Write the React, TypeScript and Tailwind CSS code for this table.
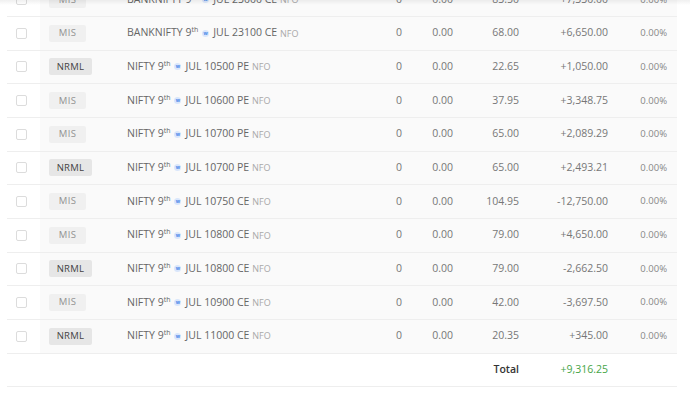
import React from "react";

type Pos = {
  product: "MIS" | "NRML";
  name: string;
  strike: string;
  ltp: string;
  pnl: string;
};

const rows: Pos[] = [
  { product: "MIS", name: "BANKNIFTY", strike: "23000 CE", ltp: "83.50", pnl: "+7,330.00" },
  { product: "MIS", name: "BANKNIFTY", strike: "23100 CE", ltp: "68.00", pnl: "+6,650.00" },
  { product: "NRML", name: "NIFTY", strike: "10500 PE", ltp: "22.65", pnl: "+1,050.00" },
  { product: "MIS", name: "NIFTY", strike: "10600 PE", ltp: "37.95", pnl: "+3,348.75" },
  { product: "MIS", name: "NIFTY", strike: "10700 PE", ltp: "65.00", pnl: "+2,089.29" },
  { product: "NRML", name: "NIFTY", strike: "10700 PE", ltp: "65.00", pnl: "+2,493.21" },
  { product: "MIS", name: "NIFTY", strike: "10750 CE", ltp: "104.95", pnl: "-12,750.00" },
  { product: "MIS", name: "NIFTY", strike: "10800 CE", ltp: "79.00", pnl: "+4,650.00" },
  { product: "NRML", name: "NIFTY", strike: "10800 CE", ltp: "79.00", pnl: "-2,662.50" },
  { product: "MIS", name: "NIFTY", strike: "10900 CE", ltp: "42.00", pnl: "-3,697.50" },
  { product: "NRML", name: "NIFTY", strike: "11000 CE", ltp: "20.35", pnl: "+345.00" },
];

function Badge({ product }: { product: Pos["product"] }) {
  return product === "MIS" ? (
    <span className="inline-flex h-[17px] w-[37px] items-center justify-center rounded-[2px] bg-[#f0f0f0] text-[9.5px] tracking-[0.3px] text-[#929292]">
      MIS
    </span>
  ) : (
    <span className="inline-flex h-[17px] w-[43px] items-center justify-center rounded-[2px] bg-[#e6e6e6] text-[9.5px] tracking-[0.3px] text-[#444]">
      NRML
    </span>
  );
}

function Row({ p }: { p: Pos }) {
  return (
    <div className="flex h-[33.67px] items-center border-b border-[#eeeeee]">
      {/* checkbox */}
      <div className="flex h-full w-[33px] items-center bg-white pl-[9px]">
        <span className="block h-[11px] w-[11px] rounded-[2px] border border-[#dcdcdc] bg-white" />
      </div>
      <div className="flex h-full flex-1 items-center bg-[#fafafa]">
        <div className="w-[87px] pl-[9px]">
          <Badge product={p.product} />
        </div>
        <div className="flex w-[243px] items-center whitespace-nowrap text-[#666]">
          <span>
            {p.name} 9<sup className="relative top-[-4px] align-baseline text-[7px]">th</sup>
          </span>
          <span className="mx-[4px] inline-flex h-[7px] w-[7px] items-center justify-center rounded-full bg-[#d9e6fb] text-[5px] font-bold leading-none text-[#4a86e8]">
            w
          </span>
          <span>JUL {p.strike}</span>
          <span className="ml-[3px] text-[9px] text-[#a9a9a9]">NFO</span>
        </div>
        <div className="w-[32px] text-right text-[#777]">0</div>
        <div className="w-[51px] text-right text-[#777]">0.00</div>
        <div className="w-[66px] text-right text-[#777]">{p.ltp}</div>
        <div className="w-[89px] text-right text-[#777]">{p.pnl}</div>
        <div className="w-[59px] text-right text-[9.5px] text-[#888]">0.00%</div>
        <div className="w-[10px]" />
      </div>
    </div>
  );
}

export default function App() {
  return (
    <div
      className="relative h-[420px] w-[690px] overflow-hidden bg-white text-[10.5px]"
      style={{ fontFamily: '"Open Sans", "Liberation Sans", sans-serif' }}
    >
      <div className="ml-[7px] -mt-[16.67px] w-[670px]">
        {rows.map((p, i) => (
          <Row key={i} p={p} />
        ))}
        {/* total */}
        <div className="flex h-[33.67px] items-center border-b border-[#eeeeee] bg-white">
          <div className="w-[363px]" />
          <div className="w-[32px]" />
          <div className="w-[51px]" />
          <div className="w-[66px] text-right font-semibold text-[#333]">Total</div>
          <div className="w-[89px] text-right text-[#46a546]">+9,316.25</div>
          <div className="w-[69px]" />
        </div>
      </div>
      {/* header shadow */}
      <div className="pointer-events-none absolute inset-x-0 top-0 h-[5px] bg-gradient-to-b from-black/[0.06] to-transparent" />
    </div>
  );
}
